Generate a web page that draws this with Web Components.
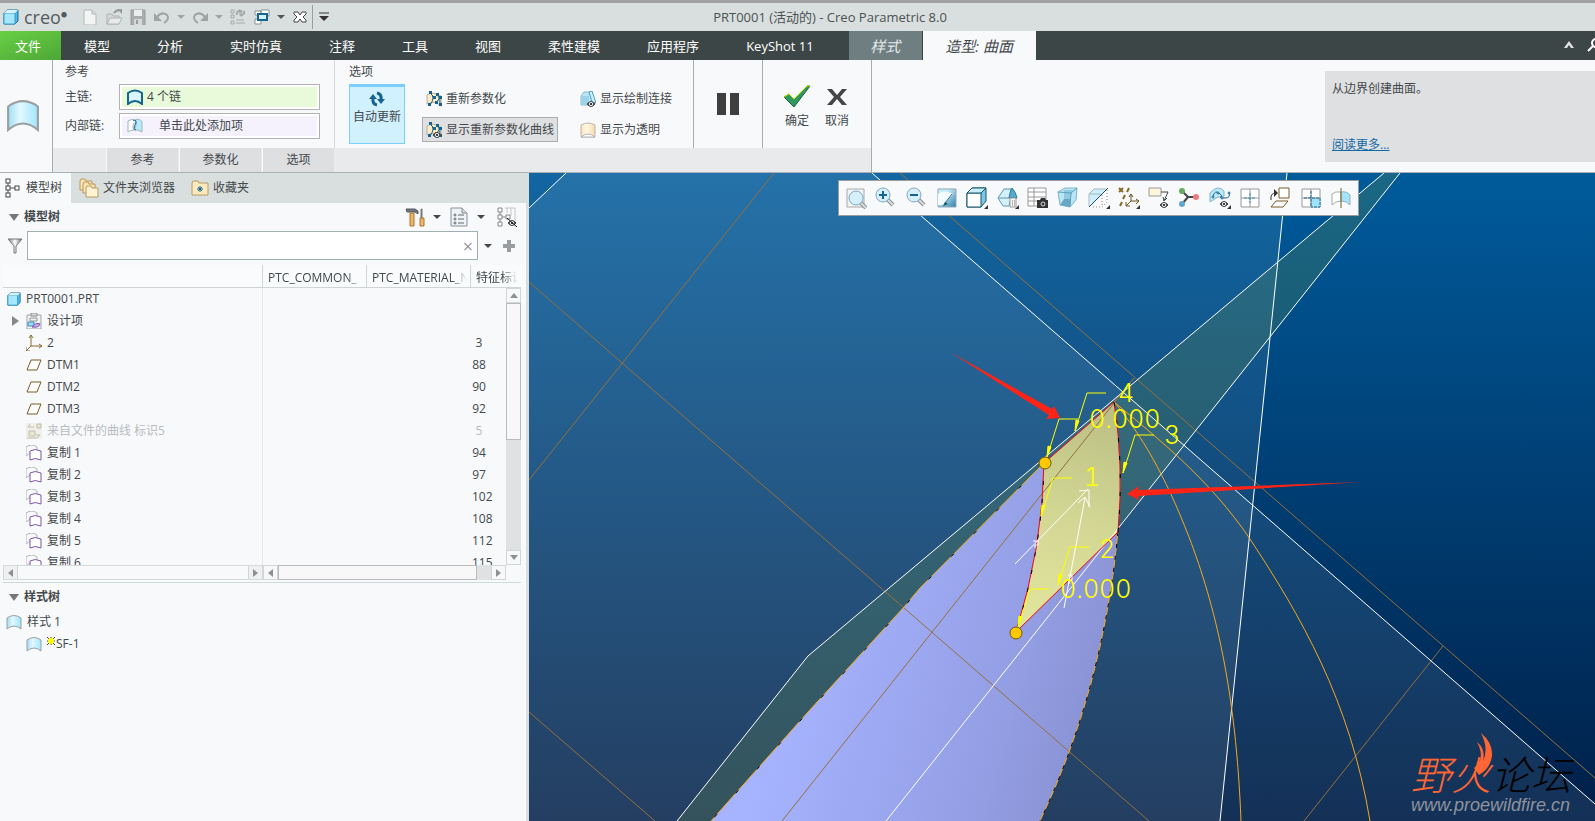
<!DOCTYPE html>
<html lang="zh-CN">
<head>
<meta charset="utf-8">
<title>PRT0001 (活动的) - Creo Parametric 8.0</title>
<style>
    * {
        box-sizing: border-box;
    }

    body {
        margin: 0;
        height: 100vh;
        overflow: hidden;
        display: flex;
        flex-direction: column;
        font: 12px/16px "Open Sans", "Noto Sans CJK SC", sans-serif;
        color: #43484b;
        background: #f8f9fb;
    }

    main {
        flex: 1;
        min-height: 0;
        display: flex;
    }
</style>
</head>
<body>
    <app-titlebar>PRT0001 (活动的) - Creo Parametric 8.0</app-titlebar>
    <ribbon-tabs></ribbon-tabs>
    <surface-ribbon></surface-ribbon>
    <main>
        <navigator-pane>
            <tree-section slot="model" heading="模型树">
                <model-tools slot="tools"></model-tools>
                <model-tree></model-tree>
            </tree-section>
            <tree-section slot="style" heading="样式树">
                <style-tree></style-tree>
            </tree-section>
        </navigator-pane>
        <graphics-view>
            <view-toolbar slot="toolbar"></view-toolbar>
            <site-mark slot="mark"></site-mark>
        </graphics-view>
    </main>

<script>
const base = /*html*/`
    <style>
        * {
            box-sizing: border-box;
        }
        button {
            font: inherit;
            color: inherit;
            background: none;
            border: 0;
            padding: 0;
            margin: 0;
            display: flex;
            align-items: center;
            justify-content: center;
        }
    </style>
`

const surface = (fill, stroke, w = 1) => `
    <linearGradient id="s"><stop offset="0" stop-color="#9edff5"/><stop offset=".4" stop-color="#e4f8ff"/><stop offset="1" stop-color="#9fe6ff"/></linearGradient>
    <path d="M1 4Q8-1 15 4V15Q8 9 1 15Z" fill="${fill}" stroke="${stroke}" stroke-width="${w}"/>`

const lens = /*html*/`
    <path d="M12 12l6 6" stroke="#8d9396" stroke-width="4"/><path d="M12 12l6 6" stroke="#d9dcde" stroke-width="2"/>
    <circle cx="8" cy="8" r="7" fill="#d5f0fc" stroke="#7fa9bd"/>`

const param = /*html*/`
    <path d="M1 4Q7 0 15 5V15Q8 9 1 13Z" fill="#fdebc8" stroke="#b9b09c"/>
    <path d="M4 2Q10 6 4 14M11 3Q15 8 14 14M4 2l4 4M11 11l3-5" fill="none" stroke="#1c5f86"/>
    <g fill="#16658f"><rect x="3" y="0" width="3" height="3"/><rect x="7" y="5" width="3" height="3"/><rect x="2" y="12" width="3" height="3"/><rect x="10" y="2" width="3" height="3"/><rect x="13" y="5" width="3" height="3"/><rect x="9" y="10" width="3" height="3"/><rect x="13" y="12" width="3" height="3"/></g>`

const eye = (x, y) => `<g transform="translate(${x} ${y})"><path d="M0 3Q4-2 8 3Q4 8 0 3Z" fill="#555" stroke="#444"/><circle cx="4" cy="3" r="2" fill="#fff"/><circle cx="4" cy="3" r="1"/></g>`
const corner = '<path d="M22 18v4h-4z" fill="#333"/>'

// name: [viewBox size, markup]
const icons = {
    cube: [16, '<path d="M1 4l3-3h11v11l-3 3H1z" fill="#4fb9e8" stroke="#1d6f97"/><path d="M1 4h11v11H1z" fill="#a4e7ff" stroke="#3c9cc7"/><path d="M1 4l3-3h11l-3 3z" fill="#d6f4ff"/>'],
    file: [16, '<path d="M2 1h8l4 4v11H2z" fill="#f3f4f4" stroke="#b4b8b8"/><path d="M10 1v4h4" fill="#ddd" stroke="#b4b8b8"/>'],
    open: [16, '<path d="M1 15V5h5l1 2h6v8z" fill="#d6d8d8" stroke="#aeb2b2"/><path d="M1 15l3-6h12l-3 6z" fill="#e9ebeb" stroke="#aeb2b2"/><path d="M8 4q2-3 6-3" fill="none" stroke="#999" stroke-width="2"/><path d="M11 0h5v5z" fill="#999"/>'],
    save: [16, '<path d="M1 1h14v15H1z" fill="#a9adad" stroke="#989c9c"/><path d="M4 1h8v6H4z" fill="#eceeee"/><path d="M4 10h8v6H4z" fill="#d6d9d9"/><path d="M6 11h2v4H6z" fill="#999"/>'],
    undo: [16, '<path d="M3 8Q8 2 13 6Q16 10 10 14" fill="none" stroke="#9ea3a3" stroke-width="2"/><path d="M0 4v8h8z" fill="#9ea3a3"/>'],
    redo: [16, '<path d="M13 8Q8 2 3 6Q0 10 6 14" fill="none" stroke="#9ea3a3" stroke-width="2"/><path d="M16 4v8H8z" fill="#9ea3a3"/>'],
    regen: [16, '<g fill="none" stroke="#a3a8a8"><path d="M1 1h3v3H1zM1 6h3v3H1zM1 12h3v3H1zM6 14h9M6 11h8"/><path d="M7 6q-1-4 3-4M14 2q1 4-3 4" stroke-width="2"/></g><path d="M9 0l4 2-4 3zM12 3l-3 3 3 2z" fill="#a3a8a8"/>'],
    windows: [16, '<path d="M7 1h8v6H7zM1 2h6v4H1zM1 10h6v5H1z" fill="#fff" stroke="#8b9092"/><path d="M4 5h9v6H4z" fill="#d5f1ff" stroke="#16658f" stroke-width="2"/>'],
    shut: [16, '<path d="M2 3h4l2 3 2-3h4v2l-3 3 3 3v2h-4l-2-3-2 3H2v-2l3-3-3-3z" fill="#fff" stroke="#444"/>'],
    caret: [8, '<path d="M0 2h8L4 6z" fill="currentColor"/>'],
    more: [10, '<path d="M0 1h10" stroke="#333"/><path d="M0 4h10L5 9z" fill="#333"/>'],
    surface: [16, surface('url(#s)', '#9a9fa2')],
    surfaceBold: [16, surface('#d9f5ff', '#16658f', 2)],
    surfaceInner: [16, '<path d="M1 3Q4 0 9 3Q4 8 7 12Q3 12 1 14Z" fill="#fff" stroke="#9bb5c2"/><path d="M8 2Q13 0 15 4V14Q11 11 7 12Q11 6 8 2Z" fill="#b6ebfb" stroke="#9bb5c2"/><path d="M6 2Q11 2 8 7Q6 11 9 12" fill="none" stroke="#16658f" stroke-width="1"/>'],
    surfaceCream: [16, '<linearGradient id="c"><stop offset="0" stop-color="#fde3b4"/><stop offset=".4" stop-color="#fff8e9"/><stop offset="1" stop-color="#fbdca5"/></linearGradient><path d="M1 3Q8-1 15 3V15H1Z" fill="url(#c)" stroke="#b5b5b5"/><path d="M1 15Q8 9 15 15Z" fill="#fff" stroke="#b5b5b5"/>'],
    update: [16, '<path d="M8 14Q3 13 4 7M8 2Q13 3 12 9" fill="none" stroke="#16658f" stroke-width="3"/><path d="M0 8l4-5 4 5zM8 8h8l-4 5z" fill="#16658f"/>'],
    param: [16, param],
    paramEye: [16, param + eye(7, 10)],
    sketchLink: [16, '<path d="M1 5l3-4h8v10l-3 3H1z" fill="#b5e7fa" stroke="#8fb7c9"/><path d="M1 5h8v9H1z" fill="#9cd2ea"/><path d="M9 1l3-1 4 12-4-1z" fill="#c8f0ff" stroke="#559bbd"/>' + eye(7, 10)],
    pause: [24, '<path d="M1 1h9v22H1zM14 1h9v22h-9z" fill="#3f3f3f"/>'],
    check: [28, '<path d="M1 14l5-3 5 5L24 3h3L11 24z" fill="#2e9a5f" stroke="#1d5c3b"/><path d="M1 14l5-3 5 5L24 3h3" fill="none" stroke="#c6e800"/>'],
    cancel: [20, '<path d="M0 2h5l5 6 5-6h5l-7 8 7 8h-5l-5-6-5 6H0l7-8z" fill="#454545"/>'],
    chevron: [12, '<path d="M1 8l5-7 5 7H8L6 5 4 8z" fill="#dfe3e3"/>'],
    find: [16, '<circle cx="9" cy="5" r="4" fill="none" stroke="#fff" stroke-width="2"/><path d="M6 8l-5 5" stroke="#fff" stroke-width="2"/>'],
    tree: [20, '<path d="M4 5v3M4 12v3M6 10h5" stroke="#555"/><g fill="#fff" stroke="#444"><rect x="2" y="1" width="4" height="4"/><rect x="2" y="8" width="4" height="4"/><rect x="2" y="15" width="4" height="4"/><rect x="11" y="8" width="4" height="4"/></g>'],
    folders: [20, '<g fill="#fbe3ad" stroke="#b59a61"><path d="M1 12V3l1-2h4l1 2h6v9z"/><path d="M4 15V6l1-2h4l1 2h6v9z"/><path d="M7 19V10l1-2h4l1 2h6v9z" fill="#fff3d4"/></g>'],
    favorite: [18, '<path d="M1 16V4l1-2h5l1 2h9v12z" fill="#fde9bd" stroke="#b59a61"/><path d="M6 10h6M9 7v6M7 8l4 4M11 8l-4 4" stroke="#16658f"/>'],
    hammer: [20, '<path d="M1 2h9l3 2v3l-3-2H2z" fill="#70767c" stroke="#555b62"/><path d="M5 6h4v13H5z" fill="#e9b765" stroke="#a87534"/><path d="M16 2h1v9h-1z" fill="#777" stroke="#777"/><path d="M15 11h4v8h-4z" fill="#e9b765" stroke="#a87534"/>'],
    listDoc: [20, '<path d="M2 1h11l5 5v13H2z" fill="#edf3f8" stroke="#8b9092"/><path d="M13 1v5h5" fill="#cfd6da" stroke="#8b9092"/><g fill="none" stroke="#666"><circle cx="6" cy="8" r="1"/><circle cx="6" cy="12" r="1"/><circle cx="6" cy="16" r="1"/><path d="M9 8h6M9 12h6M9 16h6"/></g>'],
    treeHide: [20, '<g fill="none" stroke="#888"><path d="M1 1h4v4H1zM1 8h4v4H1zM1 15h4v4H1zM9 8h4v4H9zM3 5v3M3 12v3M5 10h4"/><path d="M8 1h10v16M14 1v8M10 1v5" stroke="#c4c7c9"/></g>' + eye(11, 13) + '<path d="M10 11l10 9" stroke="#111"/>'],
    funnel: [16, '<linearGradient id="f"><stop offset="0" stop-color="#777"/><stop offset=".5" stop-color="#fff"/><stop offset="1" stop-color="#666"/></linearGradient><path d="M1 1h14L9 8v7H7V8z" fill="url(#f)" stroke="#777"/>'],
    plus: [12, '<path d="M4 0h4v4h4v4H8v4H4V8H0V4h4z" fill="#999d9f"/>'],
    design: [16, '<path d="M1 2h14v14H1z" fill="#f0f2f4" stroke="#a1a6aa"/><path d="M5 0h6v3H5z" fill="#ddd" stroke="#8b9092"/><path d="M4 5h7v3H4z" fill="none" stroke="#999"/><path d="M2 9h6v4H2z" fill="#9fdcf5" stroke="#3c8fb5"/><path d="M6 14q4-5 8-3-1 4-8 3z" fill="#cbb2ea" stroke="#7a4fb0"/>'],
    csys: [16, '<path d="M5 0v11h11M5 11l-5 5M3 3l2-3 2 3M13 9l3 2-3 2M0 12v4h4" fill="none" stroke="#8a6a2b"/>'],
    datum: [16, '<path d="M5 3h10l-4 10H1z" fill="#fff" stroke="#7a5c22"/>'],
    curveFile: [16, '<path d="M0 0h16v16H0z" fill="#efefec"/><g fill="#e9e7d2" stroke="#c3c0a8"><path d="M3 8h6v5H3zM11 1h4v4h-4z"/><path d="M2 4h6M4 1L2 4M1 15h10l3-3h-4" fill="none"/></g>'],
    copy: [16, '<path d="M0 11V2Q6-2 11 2V6M0 11L4 8" fill="none" stroke="#b1b4b7"/><path d="M4 6Q9 3 15 6V15Q9 12 4 15Z" fill="#fff" stroke="#7d56a6"/>'],
    refit: [22, '<path d="M2 2h17v18H2z" fill="#f3f4f5" stroke="#a5a9ab"/><g transform="translate(3 3)">' + lens + '</g>'],
    zoomIn: [22, lens + '<path d="M4 8h8M8 4v8" stroke="#16658f" stroke-width="2"/>'],
    zoomOut: [22, lens + '<path d="M4 8h8" stroke="#16658f" stroke-width="2"/>'],
    repaint: [22, '<linearGradient id="r" x2="1" y2="1"><stop offset=".3" stop-color="#c9edfa"/><stop offset="1" stop-color="#2f7fa6"/></linearGradient><path d="M2 2h18v18H2z" fill="url(#r)" stroke="#8ba9b8"/><path d="M2 7Q9 2 17 7L7 18H2z" fill="#f4fcff"/><path d="M16 7L9 16" stroke="#2b7193"/><path d="M7 19l2-4 3 2z" fill="#16556f"/>'],
    shaded: [22, '<path d="M1 6l5-5h14v13l-5 6H1z" fill="#7cc6e6" stroke="#16556f"/><path d="M1 6h14v14H1z" fill="#fff" stroke="#16556f"/><path d="M1 6l5-5h14l-5 5z" fill="#c9efff" stroke="#16556f"/>'],
    saved: [22, '<path d="M1 11l6-9h7v9l-2 8H6z" fill="#d3f1fd" stroke="#5d97b1"/><path d="M1 11h11" stroke="#5d97b1"/><path d="M12 11Q13 4 15 1Q19 5 20 11z" fill="#5aa9cc" stroke="#2e7ba0"/><path d="M13 11h6v9h-6z" fill="#f8f8f8" stroke="#999"/><path d="M15 14h1M17 14h1M15 16h1M17 16h1M15 18h1M17 18h1" stroke="#777"/>'],
    views: [22, '<g fill="#fff" stroke="#999"><path d="M1 1h18v18H1z"/><path d="M1 5h18M1 10h18M1 14h18M7 1v18" fill="none"/></g><path d="M10 13h3l1-2h4l1 2h2v8H10z" fill="#333"/><circle cx="16" cy="17" r="2" fill="#333" stroke="#ddd"/>'],
    perspective: [22, '<path d="M1 5l7-4h12l-1 12-6 7-10-2z" fill="#b9e6f6" stroke="#7fb3c7"/><path d="M3 18l4-6h6v8z" fill="#6aa7c2"/><path d="M7 3h9l-3 9H7z" fill="#8fcbe2"/><path d="M1 5l13 1 6-5M14 6l-1 14" fill="none" stroke="#5e9fba"/>'],
    hidden: [22, '<path d="M1 7l5-5h12L3 19z" fill="#cdeffb"/><path d="M19 3v12l-5 5H3M14 8v11" fill="none" stroke="#888" stroke-dasharray="1 2"/><path d="M1 7h12M1 7v12M1 7l5-5h12" fill="none" stroke="#a3b8c1"/><path d="M20 1L1 20" stroke="#1f4f66"/>'],
    datums: [22, '<g fill="none" stroke="#8a6a2b"><path d="M1 1l4 4M5 1L1 5M11 1L9 5M7 8l-2 4M4 15l-2 4" stroke-width="2"/><path d="M13 7v7h8M13 14l-5 5M11 10l2-3 2 3M18 12l3 2-3 3M8 15v4h4" stroke="#6c521e"/></g>'],
    annotate: [22, '<path d="M1 1h12v8H1z" fill="#fff5da" stroke="#999"/><path d="M13 5h7l-4 9M15 10l1 4 3-3" fill="none" stroke="#444"/>' + eye(12, 15)],
    spin: [22, '<path d="M4 4l6 6h7M10 10l-6 7" fill="none" stroke="#444" stroke-width="2"/><circle cx="4" cy="4" r="3" fill="#67ab62"/><circle cx="18" cy="10" r="3" fill="#ee7c7c"/><circle cx="4" cy="17" r="3" fill="#5ea8cf"/>'],
    analysis: [22, '<path d="M1 15V6Q9-3 15 4V9Q8 9 1 15z" fill="#bdeafa" stroke="#7fb3c9"/><path d="M4 9q2-6 6-3t2 4 4 1 4-6" fill="none" stroke="#16658f"/><g fill="#fff" stroke="#16658f"><circle cx="4" cy="10" r="1"/><circle cx="9" cy="6" r="1"/><circle cx="13" cy="11" r="1"/><circle cx="20" cy="6" r="1"/></g>' + eye(11, 14)],
    section: [22, '<path d="M2 2h18v18H2z" fill="#fff" stroke="#999"/><path d="M11 2v18M2 11h18" stroke="#999"/><path d="M11 6v10M5 11h12" stroke="#3d8fb5" stroke-dasharray="3 1"/>'],
    orient: [22, '<path d="M10 1h10v10H10z" fill="#fff" stroke="#7a5c22"/><path d="M7 14h12l-5 6H2z" fill="#fff" stroke="#7a5c22"/><path d="M2 13Q1 6 7 6" fill="none" stroke="#333"/><path d="M5 2l4 4-4 4z" fill="#333"/>'],
    sectionFill: [22, '<path d="M2 2h18v18H2z" fill="#fff" stroke="#999"/><path d="M11 11h9v9h-9z" fill="#9fe2fb"/><path d="M11 2v18M2 11h18" stroke="#999"/><path d="M11 4v16M4 11h16v9h-9" fill="none" stroke="#16658f" stroke-dasharray="3 1"/>'],
    mirror: [22, '<path d="M2 18V7Q5 4 11 5V14Q5 14 2 18z" fill="#fff" stroke="#aaa"/><path d="M11 5Q17 4 20 8V18Q17 14 11 14z" fill="#a6e4fa" stroke="#8fb5c5"/><path d="M11 1v20" stroke="#7a5c22"/>']
}

class CreoIcon extends HTMLElement {
    connectedCallback() {
        const [box, markup] = icons[this.getAttribute('name')]
        const size = this.getAttribute('size') || box
        this.attachShadow({mode: 'open'}).innerHTML = /*html*/`
            <style>
                :host {
                    display: inline-flex;
                    flex: none;
                }
                svg {
                    display: block;
                }
            </style>
            <svg width="${size}" height="${size}" viewBox="0 0 ${box} ${box}" aria-hidden="true">${markup}${this.hasAttribute('menu') ? corner : ''}</svg>
        `
    }
}

class AppTitlebar extends HTMLElement {
    constructor() {
        super()
        const tools = [['file', '新建'], ['open', '打开'], ['save', '保存'], ['undo', '撤消'], ['caret', '撤消列表', 'dim'], ['redo', '重做'], ['caret', '重做列表', 'dim'], ['regen', '重新生成'], ['windows', '窗口'], ['caret', '窗口列表'], ['shut', '关闭']]
        this.attachShadow({mode: 'open'}).innerHTML = base + /*html*/`
            <style>
                :host {
                    display: flex;
                    align-items: center;
                    height: 31px;
                    flex: none;
                    border-top: 3px solid #a1a1a1;
                    background: #d9dfde;
                }
                .brand {
                    display: flex;
                    align-items: center;
                    gap: 5px;
                    width: 82px;
                    padding-left: 3px;
                    font-size: 18px;
                    color: #525b5e;
                }
                .brand span {
                    display: flex;
                }
                .brand sup {
                    font-size: 6px;
                    line-height: 12px;
                    vertical-align: top;
                }
                .tools {
                    display: flex;
                    gap: 8px;
                }
                .tools button {
                    width: 16px;
                    height: 16px;
                }
                .tools .caret {
                    width: 6px;
                    color: #555;
                }
                .tools .dim {
                    color: #9ea3a3;
                }
                .rest {
                    margin-left: 4px;
                    padding-left: 6px;
                    height: 24px;
                    border-left: 1px solid #9a9fa0;
                }
                .title {
                    flex: 1;
                    text-align: center;
                    padding-right: 264px;
                    font-size: 13px;
                    color: #4b5254;
                }
            </style>
            <div class="brand"><creo-icon name="cube"></creo-icon><span>creo<sup>●</sup></span></div>
            <div class="tools">
                ${tools.map(([icon, label, dim = '']) => `<button class="${icon} ${dim}" aria-label="${label}"><creo-icon name="${icon}"></creo-icon></button>`).join('')}
            </div>
            <button class="rest" aria-label="自定义"><creo-icon name="more"></creo-icon></button>
            <div class="title"><slot></slot></div>
        `
    }
}

class RibbonTabs extends HTMLElement {
    constructor() {
        super()
        const tabs = ['模型', '分析', '实时仿真', '注释', '工具', '视图', '柔性建模', '应用程序', 'KeyShot 11']
        this.attachShadow({mode: 'open'}).innerHTML = base + /*html*/`
            <style>
                :host {
                    display: flex;
                    height: 29px;
                    flex: none;
                    background: #3d4646;
                    color: #fff;
                    font-size: 13px;
                }
                button {
                    padding: 0 24px 0 23px;
                    white-space: nowrap;
                }
                .file {
                    width: 61px;
                    padding: 0 5px 0 0;
                    background: linear-gradient(160deg, #68d044, #4ea637);
                }
                .style, .current {
                    font-size: 15px;
                    font-style: italic;
                    padding: 0;
                }
                .style {
                    width: 73px;
                    margin-left: 11px;
                    background: #6f7f81;
                    color: #e3e8e8;
                }
                .current {
                    width: 113px;
                    margin-left: 1px;
                    background: #f8f9fb;
                    color: #43484b;
                }
                .end {
                    flex: 1;
                    display: flex;
                    justify-content: flex-end;
                    gap: 12px;
                    margin-right: -8px;
                }
                .end button {
                    padding: 0;
                }
            </style>
            <button class="file">文件</button>
            ${tabs.map(tab => `<button>${tab}</button>`).join('')}
            <button class="style">样式</button>
            <button class="current">造型: 曲面</button>
            <div class="end">
                <button aria-label="最小化功能区"><creo-icon name="chevron"></creo-icon></button>
                <button aria-label="搜索"><creo-icon name="find"></creo-icon></button>
            </div>
        `
    }
}

class RibbonGroup extends HTMLElement {
    constructor() {
        super()
        this.attachShadow({mode: 'open'}).innerHTML = /*html*/`
            <style>
                :host {
                    display: block;
                    padding: 4px 0 0 12px;
                }
                .label {
                    margin-bottom: 4px;
                    height: 16px;
                }
            </style>
            <div class="label">${this.getAttribute('label')}</div>
            <slot></slot>
        `
    }
}

class SurfaceRibbon extends HTMLElement {
    constructor() {
        super()
        this.attachShadow({mode: 'open'}).innerHTML = base + /*html*/`
            <style>
                :host {
                    display: flex;
                    height: 113px;
                    flex: none;
                    border-bottom: 1px solid #aab0b3;
                    background: #f8f9fb;
                }
                .type {
                    width: 53px;
                    display: flex;
                    align-items: center;
                    padding: 0 0 3px 6px;
                    border-right: 1px solid #a6adb3;
                }
                .dash {
                    width: 819px;
                    border-right: 1px solid #a6adb3;
                    display: flex;
                    flex-direction: column;
                }
                .groups {
                    flex: 1;
                    display: flex;
                }
                .refs {
                    width: 282px;
                    border-right: 1px solid #d5d7d9;
                }
                .chains {
                    display: grid;
                    grid-template-columns: 54px 201px;
                    row-gap: 3px;
                    align-items: center;
                }
                .field {
                    display: flex;
                    align-items: center;
                    height: 26px;
                    padding: 0 4px 0 7px;
                    border: 1px solid #b2b2b2;
                    box-shadow: inset 0 0 0 2px #fff;
                }
                .field input {
                    font: inherit;
                    color: inherit;
                    border: 0;
                    padding: 0 0 0 4px;
                    background: none;
                    width: 160px;
                }
                .main {
                    background: #e9fadb;
                }
                .inner {
                    background: #f5f1fd;
                }
                .inner input {
                    padding-left: 16px;
                }
                .options {
                    width: 359px;
                    padding-left: 14px;
                    border-right: 1px solid #a6adb3;
                }
                .opts {
                    display: flex;
                }
                .auto {
                    width: 56px;
                    height: 60px;
                    flex-direction: column;
                    justify-content: flex-start;
                    gap: 2px;
                    padding-top: 4px;
                    border: 1px solid #7acfff;
                    border-top-width: 3px;
                    background: #d1f1ff;
                }
                .toggles {
                    display: grid;
                    grid-template-columns: 154px auto;
                    grid-template-rows: 25px 25px;
                    row-gap: 6px;
                    margin: 2px 0 0 17px;
                    justify-items: start;
                }
                .toggles button {
                    height: 25px;
                    padding: 0 3px;
                    gap: 4px;
                    border: 1px solid transparent;
                    white-space: nowrap;
                }
                .toggles .on {
                    background: #dfe0e2;
                    border-color: #abaeb0;
                }
                .pause {
                    width: 69px;
                    border-right: 1px solid #a6adb3;
                }
                .finish {
                    flex: 1;
                    display: flex;
                    padding-left: 14px;
                }
                .finish button {
                    width: 40px;
                    flex-direction: column;
                    gap: 2px;
                    padding-top: 4px;
                }
                .finish span {
                    height: 28px;
                    display: flex;
                    align-items: center;
                }
                .panels {
                    display: flex;
                    gap: 1px;
                    height: 24px;
                    padding-left: 53px;
                    background: #e9eaec;
                }
                .panels button {
                    background: #dedfe1;
                    width: 72px;
                    border: solid #f8f9fb;
                    border-width: 0 0 0 1px;
                }
                .panels .wide {
                    width: 82px;
                }
                aside {
                    margin: 11px 0 10px auto;
                    width: 270px;
                    padding: 10px 7px 9px;
                    background: #dfe0e2;
                    display: flex;
                    flex-direction: column;
                    justify-content: space-between;
                    align-items: flex-start;
                }
                a {
                    color: #1268a4;
                }
            </style>
            <div class="type"><creo-icon name="surface" size="34"></creo-icon></div>
            <div class="dash">
                <div class="groups">
                    <ribbon-group class="refs" label="参考">
                        <div class="chains">
                            <label for="main">主链:</label>
                            <div class="field main"><creo-icon name="surfaceBold"></creo-icon><input id="main" value="4 个链"></div>
                            <label for="inner">内部链:</label>
                            <div class="field inner"><creo-icon name="surfaceInner"></creo-icon><input id="inner" value="单击此处添加项"></div>
                        </div>
                    </ribbon-group>
                    <ribbon-group class="options" label="选项">
                        <div class="opts">
                            <button class="auto"><creo-icon name="update"></creo-icon>自动更新</button>
                            <div class="toggles">
                                <button><creo-icon name="param"></creo-icon>重新参数化</button>
                                <button><creo-icon name="sketchLink"></creo-icon>显示绘制连接</button>
                                <button class="on"><creo-icon name="paramEye"></creo-icon>显示重新参数化曲线</button>
                                <button><creo-icon name="surfaceCream"></creo-icon>显示为透明</button>
                            </div>
                        </div>
                    </ribbon-group>
                    <button class="pause" aria-label="暂停"><creo-icon name="pause"></creo-icon></button>
                    <div class="finish">
                        <button><span><creo-icon name="check"></creo-icon></span>确定</button>
                        <button><span><creo-icon name="cancel"></creo-icon></span>取消</button>
                    </div>
                </div>
                <div class="panels"><button>参考</button><button class="wide">参数化</button><button>选项</button></div>
            </div>
            <aside><div>从边界创建曲面。</div><a href="#help">阅读更多...</a></aside>
        `
    }
}

class NavigatorPane extends HTMLElement {
    constructor() {
        super()
        this.attachShadow({mode: 'open'}).innerHTML = base + /*html*/`
            <style>
                :host {
                    display: flex;
                    flex-direction: column;
                    width: 529px;
                    flex: none;
                    background: #f7f9fb;
                    border-right: 3px solid #d9dfde;
                }
                nav {
                    display: flex;
                    height: 30px;
                    margin-right: -3px;
                    background: #d9dfde;
                }
                nav button {
                    gap: 4px;
                    padding: 0 8px;
                }
                nav .current {
                    padding: 0 9px 0 4px;
                    gap: 2px;
                    background: #f7f9fb;
                }
                hr {
                    margin: 0 5px 0 3px;
                    border: 0;
                    border-top: 1px solid #cfd9d9;
                }
            </style>
            <nav>
                <button class="current"><creo-icon name="tree"></creo-icon>模型树</button>
                <button><creo-icon name="folders"></creo-icon>文件夹浏览器</button>
                <button><creo-icon name="favorite"></creo-icon>收藏夹</button>
            </nav>
            <slot name="model"></slot>
            <hr>
            <slot name="style"></slot>
        `
    }
}

class TreeSection extends HTMLElement {
    constructor() {
        super()
        this.attachShadow({mode: 'open'}).innerHTML = /*html*/`
            <style>
                :host {
                    display: block;
                }
                header {
                    display: flex;
                    align-items: center;
                    justify-content: space-between;
                    height: 28px;
                    padding: 0 9px;
                }
                h2 {
                    margin: 0;
                    font-size: 12px;
                    display: flex;
                    align-items: center;
                    gap: 5px;
                }
                h2::before {
                    content: "";
                    border: solid transparent;
                    border-width: 7px 5px 0;
                    border-top-color: #777;
                }
            </style>
            <header><h2>${this.getAttribute('heading')}</h2><slot name="tools"></slot></header>
            <slot></slot>
        `
    }
}

class ModelTools extends HTMLElement {
    constructor() {
        super()
        this.attachShadow({mode: 'open'}).innerHTML = base + /*html*/`
            <style>
                :host {
                    display: flex;
                    align-items: center;
                    gap: 8px;
                }
                .last {
                    margin-left: 4px;
                }
            </style>
            <button aria-label="设置"><creo-icon name="hammer"></creo-icon></button>
            <button aria-label="设置列表"><creo-icon name="caret"></creo-icon></button>
            <button aria-label="显示"><creo-icon name="listDoc"></creo-icon></button>
            <button aria-label="显示列表"><creo-icon name="caret"></creo-icon></button>
            <button class="last" aria-label="隐藏"><creo-icon name="treeHide"></creo-icon></button>
        `
    }
}

class ScrollStrip extends HTMLElement {
    constructor() {
        super()
        this.attachShadow({mode: 'open'}).innerHTML = /*html*/`
            <style>
                * {
                    box-sizing: border-box;
                }
                :host {
                    display: flex;
                    background: var(--track, #dfe1e3);
                    color: #8d9193;
                    box-sizing: border-box;
                }
                :host([vertical]) {
                    flex-direction: column;
                    width: 15px;
                }
                :host([off]) {
                    --track: #f7f9fb;
                    border: solid #d5dada;
                    border-width: 1px 0;
                }
                i {
                    width: 15px;
                    height: 15px;
                    flex: none;
                    display: grid;
                    place-content: center;
                    border: 1px solid #d2d6d6;
                    background: #f7f8f9;
                }
                :host([off]) i {
                    height: 13px;
                    border-width: 0 1px;
                    background: #eef0f2;
                }
                b {
                    flex: 0 0 var(--thumb, 0);
                    background: #f8f8f8;
                    border: 1px solid #b9bcbd;
                }
                :host([off]) b {
                    display: none;
                }
                i:last-child {
                    margin-left: auto;
                }
                :host([vertical]) i:last-child {
                    margin: auto 0 0;
                }
                i::before {
                    content: "";
                    border: solid transparent;
                    border-width: 4px 5px 4px 0;
                    border-right-color: currentColor;
                }
                i:last-child::before {
                    transform: rotate(180deg);
                }
                :host([vertical]) i::before {
                    border-width: 0 4px 5px;
                    border-color: transparent transparent currentColor;
                }
            </style>
            <i></i><b></b><i></i>
        `
    }
}

class ModelTree extends HTMLElement {
    constructor() {
        super()
        const rows = [
            ['csys', '2', 3], ['datum', 'DTM1', 88], ['datum', 'DTM2', 90], ['datum', 'DTM3', 92],
            ['curveFile', '来自文件的曲线 标识5', 5, 'dim'],
            ['copy', '复制 1', 94], ['copy', '复制 2', 97], ['copy', '复制 3', 102],
            ['copy', '复制 4', 108], ['copy', '复制 5', 112], ['copy', '复制 6', 115]
        ]
        this.attachShadow({mode: 'open'}).innerHTML = base + /*html*/`
            <style>
                :host {
                    display: block;
                }
                .filter {
                    display: flex;
                    align-items: center;
                    height: 29px;
                    padding: 0 11px 0 7px;
                }
                .box {
                    flex: 1;
                    display: flex;
                    height: 29px;
                    margin: 0 6px 0 4px;
                    background: #fff;
                    border: 1px solid #a2afb1;
                }
                .box input {
                    flex: 1;
                    border: 0;
                    background: none;
                    font: inherit;
                }
                .box button {
                    width: 18px;
                    font-size: 18px;
                    color: #979b9d;
                }
                .add {
                    margin-left: 11px;
                }
                .list {
                    display: grid;
                    grid-template-columns: 1fr 15px;
                    grid-template-rows: 23px 1fr;
                    height: 300px;
                    margin: 5px 5px 0 3px;
                    overflow: hidden;
                }
                table {
                    grid-area: 1 / 1 / 3 / 3;
                    align-self: start;
                    width: 100%;
                    table-layout: fixed;
                    border-spacing: 0;
                }
                scroll-strip[vertical] {
                    grid-area: 2 / 2;
                    --thumb: 137px;
                    z-index: 1;
                }
                th {
                    height: 23px;
                    padding: 4px 3px 0 5px;
                    font-weight: 400;
                    text-align: left;
                    background: #fafbfc;
                    border-bottom: 1px solid #cfd4d5;
                }
                th + th {
                    border-left: 1px solid #cfd4d5;
                }
                th div {
                    overflow: hidden;
                    white-space: nowrap;
                    mask: linear-gradient(to left, transparent, #000 16px);
                }
                td {
                    height: 22px;
                    padding: 0;
                }
                td:nth-child(2) {
                    border-left: 1px solid #e4e7e9;
                }
                td:last-child span {
                    display: inline-block;
                    min-width: 14px;
                    margin-left: 2px;
                    text-align: center;
                }
                .name {
                    display: flex;
                    align-items: center;
                    gap: 5px;
                    padding-left: 23px;
                    height: 22px;
                }
                .root {
                    padding-left: 4px;
                }
                .folder {
                    padding-left: 9px;
                }
                .folder::before {
                    content: "";
                    margin-right: 2px;
                    border: solid transparent;
                    border-width: 5px 0 5px 7px;
                    border-left-color: #888;
                }
                .dim {
                    color: #b9bcbe;
                }
                .bars {
                    display: flex;
                    height: 15px;
                    margin: 0 20px 2px 3px;
                }
                .bars scroll-strip {
                    width: 260px;
                }
                .bars scroll-strip + scroll-strip {
                    flex: 1;
                    --thumb: 199px;
                }
            </style>
            <div class="filter">
                <creo-icon name="funnel"></creo-icon>
                <div class="box"><input aria-label="筛选"><button aria-label="清除">×</button></div>
                <button aria-label="筛选列表"><creo-icon name="caret"></creo-icon></button>
                <button class="add" aria-label="添加"><creo-icon name="plus"></creo-icon></button>
            </div>
            <div class="list">
                <table>
                    <colgroup><col style="width: 259px"><col style="width: 104px"><col style="width: 104px"><col></colgroup>
                    <thead><tr><th></th><th><div>PTC_COMMON_</div></th><th><div>PTC_MATERIAL_N</div></th><th><div>特征标识</div></th></tr></thead>
                    <tbody>
                        <tr><td><div class="name root"><creo-icon name="cube" size="14"></creo-icon>PRT0001.PRT</div></td><td></td><td></td><td></td></tr>
                        <tr><td><div class="name folder"><creo-icon name="design"></creo-icon>设计项</div></td><td></td><td></td><td></td></tr>
                        ${rows.map(([icon, name, id, dim = '']) => /*html*/`
                            <tr class="${dim}"><td><div class="name"><creo-icon name="${icon}"></creo-icon>${name}</div></td><td></td><td></td><td><span>${id}</span></td></tr>
                        `).join('')}
                    </tbody>
                </table>
                <scroll-strip vertical></scroll-strip>
            </div>
            <div class="bars"><scroll-strip off></scroll-strip><scroll-strip></scroll-strip></div>
        `
    }
}

class StyleTree extends HTMLElement {
    constructor() {
        super()
        this.attachShadow({mode: 'open'}).innerHTML = /*html*/`
            <style>
                ul {
                    list-style: none;
                    margin: 0;
                    padding: 0 0 0 6px;
                }
                ul ul {
                    padding-left: 20px;
                }
                div {
                    display: flex;
                    align-items: center;
                    gap: 5px;
                    height: 22px;
                }
                svg {
                    margin: -6px -4px 0 0;
                }
            </style>
            <ul>
                <li><div><creo-icon name="surface"></creo-icon>样式 1</div>
                    <ul><li><div><creo-icon name="surface"></creo-icon>
                        <svg width="8" height="8" viewBox="0 0 8 8"><path d="M0 0l8 8M8 0L0 8M4 0v8M0 4h8" stroke="#444"/><circle cx="4" cy="4" r="3" fill="#ff0"/></svg>SF-1</div></li></ul>
                </li>
            </ul>
        `
    }
}

class ViewToolbar extends HTMLElement {
    constructor() {
        super()
        const tools = [
            ['refit', '重新调整'], ['zoomIn', '放大'], ['zoomOut', '缩小'], ['repaint', '重画'],
            ['shaded', '显示样式', 'menu'], ['saved', '已保存方向', 'menu'], ['views', '视图管理器'],
            ['perspective', '透视图'], ['hidden', '隐藏线', 'menu'], ['datums', '基准显示', 'menu'],
            ['annotate', '注释显示'], ['spin', '旋转中心'], ['analysis', '曲面分析', 'menu'],
            ['section', '显示所有视图'], ['orient', '活动平面方向'], ['sectionFill', '显示下一个视图'], ['mirror', '镜像']
        ]
        this.attachShadow({mode: 'open'}).innerHTML = base + /*html*/`
            <style>
                :host {
                    display: flex;
                    justify-content: space-between;
                    width: 521px;
                    padding: 0 6px;
                    height: 36px;
                    background: #f8f9fb;
                    border: 1px solid #979da1;
                    box-sizing: border-box;
                }
            </style>
            ${tools.map(([icon, label, menu = '']) => `<button aria-label="${label}"><creo-icon name="${icon}" ${menu}></creo-icon></button>`).join('')}
        `
    }
}

class SiteMark extends HTMLElement {
    constructor() {
        super()
        this.attachShadow({mode: 'open'}).innerHTML = /*html*/`
            <style>
                :host {
                    display: block;
                    width: 170px;
                }
                .name {
                    display: flex;
                    font: italic 300 40px/44px "Noto Sans CJK SC", sans-serif;
                    color: #000;
                }
                .fire {
                    color: #ff6633;
                }
                .flame {
                    width: 0;
                    overflow: visible;
                }
                svg {
                    margin: -20px 0 0 -18px;
                    display: block;
                }
                .url {
                    font: italic 18px/20px "Liberation Sans", sans-serif;
                    color: #8d939d;
                }
            </style>
            <div class="name"><span class="fire">野火</span>
                <span class="flame"><svg width="20" height="46" viewBox="0 0 20 46"><path d="M8 2Q20 12 19 25Q17 38 6 44L1 37Q13 28 4 11Q13 18 10 30Q16 18 8 2Z" fill="#ff6633"/></svg></span>
                <span>论坛</span></div>
            <div class="url">www.proewildfire.cn</div>
        `
    }
}

class GraphicsView extends HTMLElement {
    constructor() {
        super()
        const leaders = [[1087, 393], [1059, 419], [1135, 435], [1053, 478], [1070, 547], [1030, 589]]
        this.attachShadow({mode: 'open'}).innerHTML = /*html*/`
            <style>
                :host {
                    display: block;
                    position: relative;
                    flex: 1;
                    min-width: 0;
                    overflow: hidden;
                    background: #003565;
                }
                svg {
                    display: block;
                    width: 100%;
                    height: 100%;
                }
                text {
                    font: 300 25px Inter, sans-serif;
                    font-feature-settings: "tnum";
                    fill: #ff0;
                }
                ::slotted([slot=toolbar]) {
                    position: absolute;
                    left: 309px;
                    top: 7px;
                }
                ::slotted([slot=mark]) {
                    position: absolute;
                    right: 14px;
                    bottom: 6px;
                }
            </style>
            <svg viewBox="529 173 1066 648" preserveAspectRatio="xMinYMin slice">
                <defs>
                    <linearGradient id="sky" x2="0" y2="1"><stop offset="0" stop-color="#005b9b"/><stop offset="1" stop-color="#001f48"/></linearGradient>
                    <linearGradient id="blade" gradientUnits="userSpaceOnUse" x1="780" y1="700" x2="1090" y2="790"><stop offset="0" stop-color="#a6b3ff"/><stop offset=".7" stop-color="#929de2"/><stop offset="1" stop-color="#8790d0"/></linearGradient>
                    <linearGradient id="patch" gradientUnits="userSpaceOnUse" x1="1090" y1="410" x2="1030" y2="610"><stop offset="0" stop-color="#bcc085"/><stop offset=".5" stop-color="#d2d693"/><stop offset="1" stop-color="#dfe39c"/></linearGradient>
                </defs>
                <path d="M529 173H1595V821H529Z" fill="url(#sky)"/>
                <path d="M529 173H1287L1220 821H529Z" fill="#fff" fill-opacity=".07"/>
                <path d="M566 173H872L1595 804V821H529V208Z" fill="#fff" fill-opacity=".08"/>
                <path d="M1384 173H1400L886 821H677L808 656Z" fill="#5c8a50" fill-opacity=".28"/>

                <path d="M1044 463L920 588L904 607L808 712L711 821H1040Q1103 690 1118 532L1114 402Z" fill="url(#blade)"/>
                <path d="M1114 402L1044 463Q1043 545 1016 632L1118 532Q1124 465 1114 402Z" fill="url(#patch)"/>

                <g fill="none" stroke="#95703c">
                    <path d="M900 173L1595 778M529 282L1149 821M529 712L655 821M774 173L529 480M1134 378L782 821M1443 646L1304 821M1134 378L1114 402"/>
                </g>
                <g fill="none" stroke="#fff">
                    <path d="M566 173L529 208M872 173L1595 804M1384 173L808 656L677 821M1400 173L886 821M1287 173L1220 821"/>
                </g>
                <g fill="none" stroke="#f5a81c">
                    <path d="M1114 402C1141 434 1165 475 1189 537C1215 605 1236 690 1241 821M1114 402C1160 440 1210 480 1250 539C1300 615 1350 700 1370 821"/>
                    <path d="M1044 463L920 588L904 607L808 712L711 821M1118 532Q1103 690 1040 821"/>
                </g>
                <g fill="none" stroke="#000">
                    <path d="M1044 463L920 588L904 607L808 712L711 821" stroke-dasharray="4 28"/>
                    <path d="M1118 532Q1103 690 1040 821" stroke-dasharray="4 8"/>
                </g>
                <path d="M1114 402L1044 463Q1043 545 1016 632L1118 532Q1124 465 1114 402Z" fill="none" stroke="#f00414" stroke-width="1"/>
                <path d="M1044 463Q1043 545 1016 632M1118 532Q1124 465 1114 402" fill="none" stroke="#000" stroke-dasharray="4 14"/>

                <g fill="none" stroke="#fff">
                    <path d="M1015 564L1088 489M1079 491L1089 490L1089 507M1064 608L1085 498M1078 503L1085 497L1090 507"/>
                    <path d="M1033 541h5v4h-3v3M1068 575h4v5h-3v4"/>
                </g>
                <g fill="none" stroke="#ff0">
                    ${leaders.map(([x, y]) => `<path d="M${x + 19} ${y}H${x}L${x - 12} ${y + 38}"/><path d="M${x - 12} ${y + 38}l1-11 3 1z" fill="#ff0"/>`).join('')}
                </g>
                <text x="1118" y="402">4</text>
                <text x="1089" y="428">0.000</text>
                <text x="1164" y="444">3</text>
                <text x="1084" y="486">1</text>
                <text x="1099" y="558">2</text>
                <text x="1060" y="598">0.000</text>

                <g fill="#ff2415">
                    <path d="M950 352L1052 409L1054 406L1060 418L1046 419L1049 415Z"/>
                    <path d="M1362 482L1138 490L1139 486L1127 494L1139 500L1138 496Z"/>
                </g>
                <g fill="#ffc800" stroke="#6d5a10">
                    <circle cx="1045" cy="463" r="6"/><circle cx="1016" cy="633" r="6"/>
                </g>
            </svg>
            <slot name="toolbar"></slot>
            <slot name="mark"></slot>
        `
    }
}

customElements.define('creo-icon', CreoIcon)
customElements.define('app-titlebar', AppTitlebar)
customElements.define('ribbon-tabs', RibbonTabs)
customElements.define('ribbon-group', RibbonGroup)
customElements.define('surface-ribbon', SurfaceRibbon)
customElements.define('navigator-pane', NavigatorPane)
customElements.define('tree-section', TreeSection)
customElements.define('model-tools', ModelTools)
customElements.define('scroll-strip', ScrollStrip)
customElements.define('model-tree', ModelTree)
customElements.define('style-tree', StyleTree)
customElements.define('view-toolbar', ViewToolbar)
customElements.define('site-mark', SiteMark)
customElements.define('graphics-view', GraphicsView)
</script>
</body>
</html>
